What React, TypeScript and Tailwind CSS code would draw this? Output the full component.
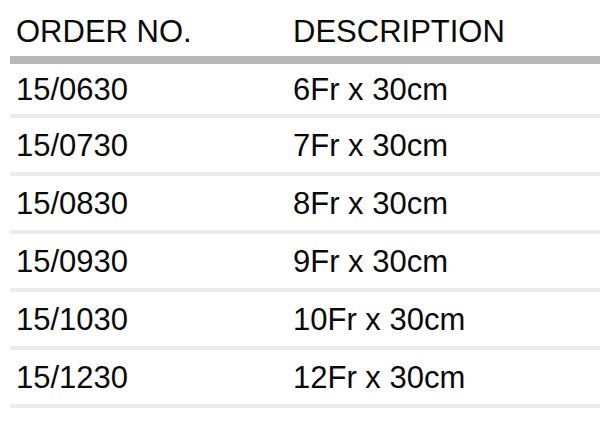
import React from "react";

const rows = [
  ["15/0630", "6Fr x 30cm"],
  ["15/0730", "7Fr x 30cm"],
  ["15/0830", "8Fr x 30cm"],
  ["15/0930", "9Fr x 30cm"],
  ["15/1030", "10Fr x 30cm"],
  ["15/1230", "12Fr x 30cm"],
];

export default function App() {
  return (
    <div
      className="w-[600px] h-[421px] bg-white pl-[10px] text-[31px] leading-none text-[#0a0a0a]"
      style={{ fontFamily: '"Liberation Sans", Arial, sans-serif' }}
    >
      <div className="flex h-[56px] items-center pt-[6px]">
        <div className="w-[277px] pl-[6px]">ORDER NO.</div>
        <div className="pl-[6px]">DESCRIPTION</div>
      </div>
      <div className="h-[8px] bg-[#b9b9b9]" />
      {rows.map(([a, b], i) => (
        <div
          key={a}
          className={
            "flex items-center border-b-4 border-[#ececec] pt-[1px] " +
            (i === 0 ? "h-[54px]" : "h-[58px]")
          }
        >
          <div className="w-[277px] pl-[6px]">{a}</div>
          <div className="pl-[6px]">{b}</div>
        </div>
      ))}
    </div>
  );
}
